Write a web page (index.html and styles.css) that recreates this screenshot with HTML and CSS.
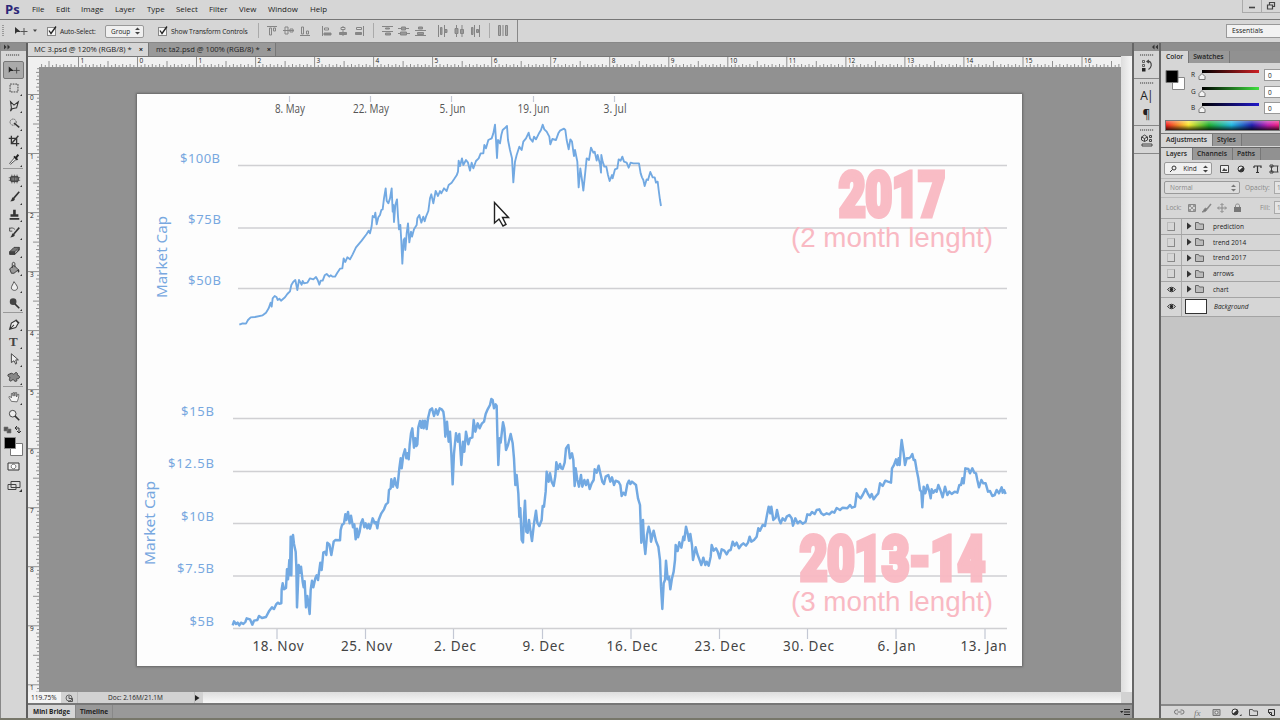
FILE: index.html
```html
<!DOCTYPE html>
<html lang="en">
  <head>
    <meta charset="UTF-8" />
    <meta name="viewport" content="width=device-width, initial-scale=1.0" />
    <title>MC 3.psd</title>
    <link rel="stylesheet" href="styles.css">
  </head>
  <body>
    <div class="app">
      <header class="menubar">
        <span class="logo">Ps</span>
        <nav class="menu">
          <span>File</span><span>Edit</span><span>Image</span><span>Layer</span><span>Type</span><span>Select</span><span>Filter</span><span>View</span><span>Window</span><span>Help</span>
        </nav>
        <div class="window-buttons">
          <span><svg width="10" height="10"><path d="M2 6.5h6" stroke="#444" stroke-width="1.6" /></svg></span>
          <span><svg width="10" height="10" fill="none" stroke="#444" stroke-width="1.2"><path d="M3.5 3.500V1.500h5v4h-2M1.500 4h5v4h-5z" /></svg></span>
        </div>
      </header>

      <div class="options">
        <svg class="options-tool" width="38" height="22" viewBox="0 0 38 22">
          <path d="M3 5v12" stroke="#999" stroke-width="2" stroke-dasharray="1 1" />
          <path d="M15 7v7l2-2h4z" fill="#333" />
          <path d="M24 8v7M20.500 11.500h7" stroke="#555" stroke-width="1" />
          <path d="M33 9.500h4l-2 2.500z" fill="#444" />
        </svg>
        <span class="check"><svg width="10" height="10" viewBox="0 0 10 10"><path d="M2 4.500l2 3L9 .5" fill="none" stroke="#222" stroke-width="1.300" /></svg></span>
        <span class="opt-label auto">Auto-Select:</span>
        <span class="select group">Group<svg width="5" height="8"><path d="M0 3l2.500-2.500L5 3zM0 5l2.500 2.500L5 5z" fill="#444" /></svg></span>
        <span class="check second"><svg width="10" height="10" viewBox="0 0 10 10"><path d="M2 4.500l2 3L9 .5" fill="none" stroke="#222" stroke-width="1.300" /></svg></span>
        <span class="opt-label">Show Transform Controls</span>
        <!-- align and distribute buttons -->
        <svg class="align" width="262" height="22" viewBox="256 20 262 22" stroke="#858585" fill="none">
          <path d="M257.500 23v15M372.500 23v15M488.500 23v15" stroke="#aaa" />
          <path d="M516.500 20v22" stroke="#888" />
          <path d="M266 26.500h10M282 30.500h11M299 35.500h10M321.500 26v10M342 26v10M362.500 26v10" />
          <path d="M268.500 28v7h2v-7zM272.500 28v3h2v-3zM284 27v7h3v-7zM289 29v3h3v-3zM300.500 27v7h2v-7zM305.500 31v3h2v-3z" />
          <path d="M323.500 28h4v2h-4zM355.500 27.500h5v2h-5zM340 27.500h4v2h-4z" fill="#ddd" />
          <path d="M323 33h7v2h-7zM338.500 32.500h7v2h-7zM354.500 32.500h6v2h-6z" fill="#888" />
          <path d="M381 26.500h11M381 31.500h11M397 28.500h11M397 33.500h12M414 30.500h11M414 35.500h11" />
          <path d="M384.500 28h4v1h-4zM384.500 33h5v2h-5zM400.500 27h4v3h-4zM399.500 32h6v3h-6zM417.500 27h4v2h-4zM416.500 32.500h6v2h-6z" fill="#999" />
          <path d="M437.500 25v12M443.500 25v12M455.500 25v12M461 25v12M473.500 25v12M478.500 25v12" />
          <path d="M439.500 27.500h1.500v7h-1.500zM444 29.500h2v3h-2zM454 28.500h3v5h-3zM459.500 29.500h3v4h-3zM470.500 27.500h1.500v7h-1.500zM475.500 29.500h2v3h-2z" fill="#999" />
          <path d="M497.500 25.500h2v10h-2zM504.500 25.500h2v10h-2z" fill="#aaa" />
          <path d="M502 25v11" />
        </svg>
        <span class="workspace">Essentials</span>
      </div>

      <main class="workarea">
        <aside class="toolbox">
          <div class="dock-head"><svg width="8" height="6"><path d="M1 .5L3.500 3 1 5.500zM4.500.5L7 3 4.500 5.500z" fill="#333" /></svg></div>
          <div class="grip"></div>
          <div class="tool active"><svg viewBox="0 0 16 16"><path d="M2 4v7l2-2h4z" fill="#222" /><path d="M11 5v7M7.500 8.500h7" stroke="#444" /></svg></div>
          <div class="tool more"><svg viewBox="0 0 16 16"><path d="M3.500 3.500h9v9h-9z" fill="none" stroke="#333" stroke-dasharray="2 1" /></svg></div>
          <div class="tool more"><svg viewBox="0 0 16 16"><path d="M4 3l4 4 5-4-2 7-5 1-2 3 1-4z" fill="none" stroke="#333" stroke-width="1.200" /></svg></div>
          <div class="tool more"><svg viewBox="0 0 16 16"><circle cx="7" cy="7" r="3.500" fill="none" stroke="#444" stroke-dasharray="1.500 1" /><path d="M8 8l6 5" stroke="#333" stroke-width="1.800" /></svg></div>
          <div class="tool more"><svg viewBox="0 0 16 16"><path d="M5 2v9h9M2 5h9v9M13 2L6 10" fill="none" stroke="#333" stroke-width="1.500" /></svg></div>
          <div class="tool more"><svg viewBox="0 0 16 16"><path d="M3 13l6-7 2 2-7 6z" fill="#eee" stroke="#444" /><path d="M8 5l4 4M10 7l3-4" stroke="#222" stroke-width="2.200" /></svg></div>
          <div class="rule"></div>
          <div class="tool more"><svg viewBox="0 0 16 16"><rect x="4" y="5" width="9" height="6" rx="1.500" fill="#888" stroke="#333" /><path d="M5.500 3v10M8.500 3v10M11.500 3v10M2 6.500h13M2 9.500h13" stroke="#444" stroke-width=".8" /></svg></div>
          <div class="tool more"><svg viewBox="0 0 16 16"><path d="M14 2L8 9" stroke="#333" stroke-width="1.800" /><path d="M3 13c2 0 6 0 6-3L7 8c-2 1-1 4-4 5z" fill="#333" /></svg></div>
          <div class="tool more"><svg viewBox="0 0 16 16"><path d="M7 2h3v5h3v3H4V7h3zM3 11.500h11v2H3z" fill="#333" /></svg></div>
          <div class="tool more"><svg viewBox="0 0 16 16"><path d="M14 3L8 10" stroke="#333" stroke-width="1.800" /><path d="M3 14c3 0 6-1 6-3L7 9c-2 1-1 4-4 5z" fill="#333" /><path d="M3 4c2-1 4-1 6 1M3 3v4h3" fill="none" stroke="#444" /></svg></div>
          <div class="tool more"><svg viewBox="0 0 16 16"><path d="M3 10l5-5h6l-5 5z" fill="#777" stroke="#333" /><path d="M3 10v3h6v-3M9 13l5-5V5" fill="#444" stroke="#333" /></svg></div>
          <div class="tool more"><svg viewBox="0 0 16 16"><path d="M3 9l5-4 5 5-5 4H5z" fill="#999" stroke="#333" /><path d="M6 8V3c0-2 3-2 3 0v4" fill="none" stroke="#333" /><path d="M13 9c2 2 1 4 0 4s-1-2 0-4" fill="#333" /></svg></div>
          <div class="tool more"><svg viewBox="0 0 16 16"><path d="M8 3c2 3 4 5 4 7 0 4-7 4-7 0 0-2 2-4 3-7z" fill="#eee" stroke="#444" /></svg></div>
          <div class="tool more"><svg viewBox="0 0 16 16"><circle cx="7" cy="6.500" r="3.800" fill="#444" /><path d="M9 9l5 5" stroke="#333" stroke-width="1.800" /></svg></div>
          <div class="rule"></div>
          <div class="tool more"><svg viewBox="0 0 16 16"><path d="M3 14l2-7 5-3 3 3-3 5zM3 14l5-5M10 3l4 4" fill="#eee" stroke="#333" stroke-width="1.200" /></svg></div>
          <div class="tool more type">T</div>
          <div class="tool more"><svg viewBox="0 0 16 16"><path d="M5 2v10l3-2 2 4 1-1-1-4h3z" fill="#eee" stroke="#333" /></svg></div>
          <div class="tool more"><svg viewBox="0 0 16 16"><path d="M4 4c2-1 3 1 4 1s1-3 3-2 0 3 1 3 3 1 2 3-3 0-3 1 1 3-1 3-2-2-3-2-3 3-4 1 1-3 0-4-2 0-2-2 4-1 3-2z" fill="#888" stroke="#333" /></svg></div>
          <div class="rule"></div>
          <div class="tool more"><svg viewBox="0 0 16 16"><path d="M5 13L2 8l1-1 2 2V4h1.500l.5 3V3h1.500L9 7l.5-4H11v5l1-3h1.500c0 4-1 6-2 8.500z" fill="#f4f4f4" stroke="#444" stroke-width=".8" /></svg></div>
          <div class="tool"><svg viewBox="0 0 16 16"><circle cx="6.500" cy="6.500" r="3.800" fill="#eee" stroke="#333" /><path d="M9 9l5 5" stroke="#333" stroke-width="1.800" /></svg></div>
          <svg class="colors" width="24" height="72" viewBox="0 0 24 72">
            <path d="M3 3h4v4H3zM6 5h4v4H6z" fill="#555" stroke="#777" stroke-width=".6" />
            <path d="M14 4h4v5M16 2l-2 2 2 2M16 7l2 2 2-2" fill="none" stroke="#333" />
            <path d="M9.500 19.500h12v12h-12z" fill="#fff" stroke="#777" />
            <path d="M3.500 13.500h11v11h-11z" fill="#000" stroke="#888" />
            <path d="M7 39h11v7H7z" fill="#eee" stroke="#333" />
            <circle cx="12.500" cy="42.500" r="2.300" fill="#fff" stroke="#333" stroke-dasharray="1 .6" />
            <path d="M10 57.500h9v6h-9zM7 60.500h8v5H7z" fill="#ddd" stroke="#444" />
            <path d="M21 65v3h-3z" fill="#333" />
          </svg>
        </aside>

        <section class="document">
          <div class="tabs">
            <span class="tab active">MC 3.psd @ 120% (RGB/8) *<b>×</b></span>
            <span class="tab">mc ta2.psd @ 100% (RGB/8) *<b>×</b></span>
          </div>
          <div class="viewport">
            <div class="ruler-corner"></div>
            <svg class="ruler-h" id="rulerH" width="1082" height="11" viewBox="39 56 1082 11"></svg>
            <div class="scroll-v"></div>
            <svg class="ruler-v" id="rulerV" width="11" height="625" viewBox="28 67 11 625"></svg>
            <div class="canvas">
              <svg class="page" width="885" height="572" viewBox="137 94 885 572">
                <g class="grid">
                  <path d="M238 165.500h769M238 228h769M238 288.500h769" />
                  <path d="M233 418.500h774M233 471.500h774M233 523.500h774M233 576h774M233 628.500h774" />
                </g>
                <g class="ticks">
                  <path d="M289.500 96v6M370.500 96v6M451.500 96v6M533.500 96v6M614.500 96v6" />
                  <path d="M277 629v10M365.500 629v10M453.500 629v10M542.500 629v10M631 629v10M719.500 629v10M807.500 629v10M896 629v10M985 629v10" />
                </g>
                <g class="dates small">
                  <text x="275" y="113" textLength="30" lengthAdjust="spacingAndGlyphs">8. May</text>
                  <text x="353" y="113" textLength="36" lengthAdjust="spacingAndGlyphs">22. May</text>
                  <text x="439.500" y="113" textLength="26" lengthAdjust="spacingAndGlyphs">5. Jun</text>
                  <text x="517.500" y="113" textLength="32" lengthAdjust="spacingAndGlyphs">19. Jun</text>
                  <text x="603.500" y="113" textLength="23" lengthAdjust="spacingAndGlyphs">3. Jul</text>
                </g>
                <g class="dates">
                  <text x="252.500" y="651" textLength="51">18. Nov</text>
                  <text x="341" y="651" textLength="51">25. Nov</text>
                  <text x="434" y="651" textLength="42">2. Dec</text>
                  <text x="522.500" y="651" textLength="42">9. Dec</text>
                  <text x="606.500" y="651" textLength="51">16. Dec</text>
                  <text x="694.500" y="651" textLength="51">23. Dec</text>
                  <text x="783" y="651" textLength="51">30. Dec</text>
                  <text x="877.500" y="651" textLength="38">6. Jan</text>
                  <text x="960.500" y="651" textLength="46">13. Jan</text>
                </g>
                <g class="amounts">
                  <text x="180" y="163" textLength="40">$100B</text>
                  <text x="188" y="224" textLength="33">$75B</text>
                  <text x="188" y="285" textLength="33">$50B</text>
                  <text x="181" y="416" textLength="33">$15B</text>
                  <text x="168" y="468" textLength="46">$12.5B</text>
                  <text x="181" y="521" textLength="33">$10B</text>
                  <text x="177" y="573" textLength="37">$7.5B</text>
                  <text x="189.500" y="626" textLength="24.500">$5B</text>
                  <text class="axis" transform="translate(167 298) rotate(-90)" textLength="82" lengthAdjust="spacingAndGlyphs">Market Cap</text>
                  <text class="axis" transform="translate(155 565) rotate(-90)" textLength="84" lengthAdjust="spacingAndGlyphs">Market Cap</text>
                </g>
                <polyline class="line thin" transform="translate(230 90) scale(.33333)" points="28,704 38,700 48,701 54,690 62,682 75,681 98,676 108,668 116,655 122,638 125,650 128,625 134,618 140,622 143,630 148,626 153,632 165,622 172,612 180,604 184,585 190,575 196,570 202,600 207,570 215,584 218,573 222,580 232,578 240,565 250,568 258,561 263,570 268,584 272,572 278,572 284,556 290,552 298,560 302,556 308,560 315,560 322,548 330,536 337,535 341,505 346,516 352,502 360,508 368,493 378,472 395,452 410,432 416,422 420,430 425,408 428,378 433,382 436,368 440,403 445,382 450,375 454,360 458,358 462,325 467,295 470,332 475,340 480,325 485,295 488,365 490,345 492,396 496,345 501,328 504,380 507,418 511,405 514,455 517,521 521,450 524,445 526,480 530,430 534,400 538,457 543,425 546,440 552,418 560,405 562,385 568,375 574,398 580,380 584,394 588,380 595,363 600,325 604,313 610,340 617,303 624,318 630,303 634,310 642,295 650,303 656,285 665,278 672,268 680,256 684,245 686,212 690,228 696,205 700,225 708,210 714,218 720,242 725,218 730,235 738,213 746,205 752,190 760,190 763,165 768,175 775,150 785,145 790,130 795,104 798,150 801,204 804,150 810,160 814,135 818,120 824,115 831,108 834,150 840,180 846,205 850,277 855,215 860,195 868,170 875,180 880,155 888,145 896,128 900,145 908,155 912,140 918,148 928,128 933,120 938,104 943,118 950,125 958,140 961,163 967,147 978,150 985,130 990,122 1002,116 1006,120 1010,150 1016,178 1021,148 1026,155 1030,185 1032,198 1035,180 1042,215 1046,292 1051,235 1056,270 1060,302 1066,245 1070,205 1077,210 1083,173 1090,188 1094,185 1100,212 1103,195 1110,222 1113,248 1114,195 1118,215 1123,230 1129,230 1134,255 1139,273 1146,255 1148,265 1155,238 1162,235 1166,208 1172,212 1177,200 1182,215 1190,218 1196,233 1202,218 1210,220 1227,220 1232,250 1236,262 1240,270 1244,288 1250,268 1254,270 1261,246 1268,262 1274,262 1278,278 1283,275 1286,300 1290,330 1293,348" />
                <polyline class="line" transform="translate(140 390) scale(.33333)" points="278,706 282,694 288,702 293,698 298,706 303,698 310,702 316,696 320,685 330,688 337,704 342,692 352,690 357,678 366,684 378,681 388,662 396,652 402,657 408,644 413,638 418,641 424,640 425,598 428,580 432,598 438,594 441,538 444,568 448,510 450,555 452,440 454,556 456,445 459,435 462,462 467,485 469,530 471,652 474,580 476,525 480,548 483,530 488,575 491,592 494,574 498,652 502,618 505,640 509,672 512,600 516,572 520,592 526,565 530,556 534,570 541,518 545,540 550,487 556,485 559,495 562,458 568,463 574,495 581,455 586,450 600,451 602,420 606,405 612,400 616,373 619,390 624,366 629,400 633,377 639,412 643,403 647,448 651,416 654,442 659,425 663,400 668,388 673,412 677,400 682,415 686,402 690,416 694,402 698,385 704,400 708,396 712,415 716,390 724,370 732,358 738,343 744,338 747,300 752,295 754,268 759,290 764,265 768,285 772,293 775,265 778,235 782,205 785,235 790,195 795,178 799,205 802,190 806,208 809,165 813,130 817,115 822,173 826,145 829,168 832,163 835,112 840,93 844,113 848,92 851,115 855,92 860,117 864,85 870,60 876,55 882,78 888,58 893,74 899,55 905,58 910,65 913,88 916,140 921,95 926,155 930,125 934,190 938,283 942,190 948,130 954,155 958,132 964,225 969,155 973,185 978,125 985,163 990,145 997,142 1001,90 1006,125 1013,100 1019,115 1026,100 1032,95 1037,72 1043,58 1050,45 1054,27 1058,30 1062,55 1067,43 1070,48 1072,130 1075,225 1079,145 1082,158 1089,97 1093,115 1098,180 1104,165 1112,132 1118,160 1122,205 1126,285 1130,255 1135,310 1138,380 1141,355 1145,450 1149,457 1152,380 1155,332 1159,425 1163,428 1167,390 1171,420 1176,453 1182,400 1188,362 1192,398 1198,408 1205,390 1208,348 1212,350 1217,305 1220,245 1226,275 1230,250 1235,275 1241,288 1246,258 1249,217 1254,237 1260,222 1264,235 1268,237 1274,218 1278,175 1285,165 1290,205 1296,190 1300,210 1304,288 1307,235 1312,270 1317,290 1323,255 1327,290 1333,270 1338,285 1343,270 1349,297 1355,280 1361,270 1364,238 1370,248 1376,227 1381,250 1387,275 1392,282 1397,260 1405,255 1411,275 1416,262 1422,285 1427,272 1436,276 1441,285 1445,318 1450,308 1456,315 1462,282 1467,272 1471,282 1476,275 1488,285 1494,325 1500,345 1504,458 1509,390 1512,455 1516,492 1521,435 1526,410 1531,430 1533,455 1541,422 1548,453 1555,470 1560,510 1563,590 1567,657 1571,580 1575,570 1578,512 1583,568 1587,560 1591,598 1596,565 1601,545 1605,510 1607,465 1613,483 1618,457 1624,473 1630,440 1633,450 1638,410 1643,430 1647,452 1651,432 1656,465 1659,510 1667,472 1672,492 1678,508 1684,525 1690,503 1696,525 1700,515 1706,527 1712,500 1715,465 1721,482 1728,475 1733,485 1739,505 1745,478 1753,482 1760,493 1766,482 1772,480 1778,455 1784,467 1790,458 1797,475 1804,465 1810,460 1818,467 1824,458 1829,440 1834,455 1842,450 1850,440 1855,415 1860,422 1868,405 1875,408 1881,375 1886,350 1891,370 1894,350 1900,390 1907,383 1911,360 1917,388 1922,400 1928,385 1935,392 1940,380 1948,375 1955,385 1959,407 1966,385 1973,400 1980,393 1988,401 1997,395 2002,373 2010,375 2016,366 2024,372 2030,360 2038,358 2044,370 2051,375 2060,370 2068,373 2076,365 2083,368 2090,354 2100,360 2108,353 2122,355 2130,345 2136,353 2145,350 2150,310 2156,320 2162,325 2168,315 2177,297 2183,310 2190,322 2195,312 2201,328 2208,318 2215,310 2220,280 2228,288 2236,272 2244,275 2253,278 2256,235 2262,225 2268,208 2272,225 2276,205 2279,225 2282,180 2285,150 2291,190 2295,225 2300,205 2307,205 2313,200 2317,192 2321,210 2325,210 2330,240 2335,265 2340,300 2344,305 2347,352 2351,290 2356,310 2362,285 2368,305 2372,325 2375,298 2380,308 2386,300 2390,305 2395,285 2401,300 2408,322 2415,290 2422,315 2428,305 2435,312 2444,305 2452,308 2458,285 2463,285 2467,265 2471,280 2476,235 2485,237 2490,250 2497,235 2503,248 2508,250 2512,270 2517,292 2524,270 2530,280 2537,280 2544,305 2550,303 2557,318 2564,315 2570,300 2577,310 2585,292 2588,308 2592,300 2597,312" />
                <g class="titles">
                  <text class="year" x="839" y="215.500" textLength="106" lengthAdjust="spacingAndGlyphs">2017</text>
                  <text class="length" x="791" y="247" textLength="202" lengthAdjust="spacingAndGlyphs">(2 month lenght)</text>
                  <text class="year" x="800" y="579.500" textLength="185" lengthAdjust="spacingAndGlyphs">2013-14</text>
                  <text class="length" x="791" y="611" textLength="202" lengthAdjust="spacingAndGlyphs">(3 month lenght)</text>
                </g>
                <path d="M494.500 202.500v20.500l4.500-4 4 7 3-1.500-3.500-7h6z" fill="#fff" stroke="#222" stroke-width="1.400" />
              </svg>
            </div>
          </div>
          <div class="status">
            <span class="zoom">119.75%</span>
            <span class="export"><svg width="10" height="10" viewBox="0 0 10 10"><circle cx="5" cy="5" r="3" fill="none" stroke="#666" /><path d="M5 3v2.500h3.500v3H4" fill="none" stroke="#555" /></svg></span>
            <span class="doc-size">Doc: 2.16M/21.1M</span>
            <span class="arrow"><svg width="5" height="6"><path d="M0 0l4.500 3L0 6z" fill="#222" /></svg></span>
            <span class="scroll-h"></span>
          </div>
          <div class="bottom-tabs">
            <span class="tab active">Mini Bridge</span><span class="tab">Timeline</span>
            <svg width="12" height="8"><path d="M0 3h3.500L1.700 5z" fill="#222" /><path d="M4 1.500h6M4 4h6M4 6.500h6" stroke="#222" /></svg>
          </div>
        </section>

        <aside class="dock">
          <div class="dock-head right"><svg width="8" height="6"><path d="M3.500.5L1 3l2.500 2.500zM7 .5L4.500 3 7 5.500z" fill="#333" /></svg></div>
          <div class="dock-group one"><div class="grip"></div>
            <svg width="14" height="14" viewBox="0 0 14 14" fill="none" stroke="#444"><path d="M2.500 1.500h2v2h-2zM2.500 5.500h2v2h-2z" stroke-width=".8" /><path d="M2 9h3.500v3.500H2z" fill="#222" stroke="none" /><path d="M7.500 2.500h3M9 1l-2 1.500L9 4M9.500 2.500c3 2 2 6-1 8" stroke-width="1.200" /></svg>
          </div>
          <div class="dock-group two"><div class="grip"></div><span class="char">A|</span><span class="para">¶</span></div>
          <div class="dock-group three"><div class="grip"></div>
            <svg width="14" height="14" viewBox="0 0 14 14" fill="none" stroke="#444"><path d="M4.500 1L7.500 3v3l-3 1.500-3-1.500V3zM1.500 3l3 1.500 3-1.500M4.500 4.500v3M9.500 1.500h2v2h-2zM9.500 5.500h2v2h-2zM2 10h10v2H2z" /></svg>
          </div>
        </aside>

        <aside class="panels">
          <div class="dock-head"></div>
          <div class="panel-tabs"><span class="tab active">Color</span><span class="tab">Swatches</span></div>
          <div class="color-panel">
            <svg class="swatch" width="28" height="30" viewBox="0 0 28 30"><path d="M11.500 8.500h12v12h-12z" fill="#fff" stroke="#888" /><path d="M5 1.500h12v12h-12z" fill="#000" stroke="#777" /></svg>
            <div class="sliders">
              <div class="slider"><span>R</span><i class="track red"><svg width="8" height="7"><path d="M4 .5l3 3v3H1v-3z" fill="#f4f4f4" stroke="#777" /></svg></i><em>0</em></div>
              <div class="slider"><span>G</span><i class="track green"><svg width="8" height="7"><path d="M4 .5l3 3v3H1v-3z" fill="#f4f4f4" stroke="#777" /></svg></i><em>0</em></div>
              <div class="slider"><span>B</span><i class="track blue"><svg width="8" height="7"><path d="M4 .5l3 3v3H1v-3z" fill="#f4f4f4" stroke="#777" /></svg></i><em>0</em></div>
            </div>
          </div>
          <div class="spectrum"></div>
          <div class="panel-tabs adjustments"><span class="tab active">Adjustments</span><span class="tab">Styles</span></div>
          <div class="panel-tabs layer-tabs"><span class="tab active">Layers</span><span class="tab">Channels</span><span class="tab">Paths</span></div>
          <div class="filter-row">
            <span class="select kind"><svg width="7" height="8" viewBox="0 0 7 8"><circle cx="4" cy="3" r="2" fill="none" stroke="#333" /><path d="M2.500 4.500L0 7" stroke="#333" /></svg>Kind<svg width="5" height="8"><path d="M0 3l2.500-2.500L5 3zM0 5l2.500 2.500L5 5z" fill="#444" /></svg></span>
            <svg width="60" height="12" viewBox="0 0 60 12"><path d="M.5 2.500h8v7h-8z" fill="#eee" stroke="#444" /><path d="M2 8l2-3 2 2 1-1v2z" fill="#444" /><circle cx="21" cy="6" r="3" fill="#eee" stroke="#333" /><path d="M23.500 3.500A3.400 3.400 0 0 1 18.500 8z" fill="#333" /><path d="M34 3h7v2M37.500 3v6.500M36 9.500h3M34 3v2" fill="none" stroke="#333" stroke-width="1.200" /><path d="M51.500 3v6h7M51.500 3h7M50 2h3v2h-3zM50 8h3v2h-3zM57.500 3v6" fill="none" stroke="#444" /></svg>
          </div>
          <div class="blend-row"><span class="select">Normal<svg width="5" height="8"><path d="M0 3l2.500-2.500L5 3zM0 5l2.500 2.500L5 5z" fill="#777" /></svg></span><span>Opacity:</span><em>1</em></div>
          <div class="lock-row"><span class="lock-label">Lock:</span>
            <svg width="60" height="12" viewBox="0 0 60 12" fill="none" stroke="#888"><path d="M4.500 2.500h7v7h-7z" /><path d="M5 3h2v2H5zM9 3h2v2H9zM7 5h2v2H7zM5 7h2v2H5zM9 7h2v2H9z" fill="#999" stroke="none" /><path d="M27 2l-4 5" stroke-width="1.500" /><path d="M18 10c3 0 5-1 5-3l-1-1c-2 0-2 3-4 4z" fill="#777" /><path d="M38 2v8M34 6h8M36.500 3L38 1.500 39.500 3M36.500 9l1.500 1.500L39.500 9M35 4.500L33.500 6 35 7.500M41 4.500L42.500 6 41 7.500" /><path d="M51.500 5V3.500c0-2 4-2 4 0V5" /><path d="M50 5h7v5h-7z" fill="#777" stroke="none" /></svg>
            <span class="fill">Fill:</span><em>1</em>
          </div>
          <ul class="layers">
            <li><span class="eye"><i></i></span><svg class="folder" viewBox="0 0 20 10"><path d="M1 1.500v7l4.500-3.500z" fill="#333" /><path d="M9.500 8.500v-7h3l1 1.500h4v5.500z" fill="#bbb" stroke="#666" /></svg>prediction</li>
            <li><span class="eye"><i></i></span><svg class="folder" viewBox="0 0 20 10"><path d="M1 1.500v7l4.500-3.500z" fill="#333" /><path d="M9.500 8.500v-7h3l1 1.500h4v5.500z" fill="#bbb" stroke="#666" /></svg>trend 2014</li>
            <li><span class="eye"><i></i></span><svg class="folder" viewBox="0 0 20 10"><path d="M1 1.500v7l4.500-3.500z" fill="#333" /><path d="M9.500 8.500v-7h3l1 1.500h4v5.500z" fill="#bbb" stroke="#666" /></svg>trend 2017</li>
            <li><span class="eye"><i></i></span><svg class="folder" viewBox="0 0 20 10"><path d="M1 1.500v7l4.500-3.500z" fill="#333" /><path d="M9.500 8.500v-7h3l1 1.500h4v5.500z" fill="#bbb" stroke="#666" /></svg>arrows</li>
            <li><span class="eye"><svg width="9" height="7" viewBox="0 0 9 7"><path d="M.5 3.500Q4.500-1 8.500 3.500 4.500 8 .5 3.500z" fill="#ddd" stroke="#333" /><circle cx="4.500" cy="3.500" r="1.700" fill="#222" /></svg></span><svg class="folder" viewBox="0 0 20 10"><path d="M1 1.500v7l4.500-3.500z" fill="#333" /><path d="M9.500 8.500v-7h3l1 1.500h4v5.500z" fill="#bbb" stroke="#666" /></svg>chart</li>
            <li class="background"><span class="eye"><svg width="9" height="7" viewBox="0 0 9 7"><path d="M.5 3.500Q4.500-1 8.500 3.500 4.500 8 .5 3.500z" fill="#ddd" stroke="#333" /><circle cx="4.500" cy="3.500" r="1.700" fill="#222" /></svg></span><span class="thumb"></span>Background</li>
          </ul>
          <div class="layer-actions">
            <svg width="117" height="12" viewBox="1163 706 117 12" fill="none" stroke="#777">
              <path d="M1178 710h-1.500a2 2 0 0 0 0 4h1.500M1180.500 710h1.500a2 2 0 0 1 0 4h-1.500M1177.500 712h4" />
              <path d="M1213 709.500h7v6h-7z" fill="#bbb" /><circle cx="1216.500" cy="712.500" r="1.500" fill="#eee" />
              <circle cx="1235" cy="712" r="3" fill="#eee" stroke="#333" /><path d="M1237.500 709.500a3.400 3.400 0 0 1-5 4.500z" fill="#333" stroke="none" /><path d="M1241.500 714v2h-2z" fill="#333" stroke="none" />
              <path d="M1249.500 715.500v-6h3l1 1.500h4v4.500z" stroke="#555" />
              <path d="M1268.500 709.500h6v6h-3l-3-3zM1268.500 712.500h3v3" stroke="#333" />
              <text x="1194" y="715.500" class="fx">fx</text>
            </svg>
          </div>
        </aside>
      </main>
      <div class="taskbar"></div>
    </div>

    <script>
      // Ruler marks: one unit is 59px, split in sixteenths, zero at the page corner
      const UNIT = 59.03;

      function tickLength(i) {
        if (i % 16 === 0) return 11;
        if (i % 8 === 0) return 6;
        return i % 2 === 0 ? 3 : 2;
      }

      let hTicks = "";
      let hLabels = "";
      for (let i = -26; i <= 266; i++) {
        const x = (137.5 + (i * UNIT) / 16).toFixed(1);
        hTicks += `M${x} 67v-${tickLength(i)}`;
        if (i % 16 === 0) {
          hLabels += `<text x="${+x + 2}" y="62.5">${Math.abs(i / 16)}</text>`;
        }
      }
      document.getElementById("rulerH").innerHTML = `<path d="${hTicks}" />${hLabels}`;

      let vTicks = "";
      let vLabels = "";
      for (let i = -7; i <= 162; i++) {
        const y = (94.5 + (i * UNIT) / 16).toFixed(1);
        vTicks += `M39 ${y}h-${tickLength(i)}`;
        if (i % 16 === 0) {
          vLabels += `<text x="30" y="${+y + 5.5}">${String(i / 16)[0]}</text>`;
        }
      }
      document.getElementById("rulerV").innerHTML = `<path d="${vTicks}" />${vLabels}`;
    </script>
  </body>
</html>
```
FILE: styles.css
```css
* {
  box-sizing: border-box;
}
body {
  margin: 0;
  font-family: "Open Sans", "Noto Sans", sans-serif;
  font-size: 6.5px;
  color: #222;
  overflow: hidden;
}
svg {
  display: block;
  flex: none;
}
em,
i {
  font-style: normal;
}
.app {
  width: 1280px;
  height: 720px;
  display: grid;
  grid-template-rows: 20px 23px 675px 2px;
  background-color: #d6d6d6;
}

/* menu and options bars */
.menubar {
  display: flex;
  align-items: center;
  border-bottom: 1px solid #777;
}
.logo {
  width: 32px;
  padding-left: 5px;
  font-size: 13px;
  font-weight: 700;
  line-height: 16px;
  padding-bottom: 2px;
  color: #2c2878;
}
.menu {
  display: grid;
  grid-template-columns: 24px 25px 34px 32px 29px 33px 30px 29px 42px 30px;
  font-size: 7.9px;
  line-height: 17px;
  padding-bottom: 1px;
}
.window-buttons {
  display: flex;
  align-self: flex-start;
  margin-left: auto;
}
.window-buttons span {
  width: 19px;
  height: 13px;
  padding: 1px 4px;
  border: 1px solid #aaa;
  border-top: 0;
  border-right: 0;
}
.options {
  display: flex;
  align-items: center;
  overflow: hidden;
  border-bottom: 1px solid #888;
}
.options-tool {
  width: 38px;
  margin-right: 9px;
}
.check {
  width: 9px;
  height: 9px;
  background-color: #f6f6f6;
  border: 1px solid #888;
}
.check svg {
  margin: -2px 0 0 -1px;
}
.check.second {
  margin-left: 14px;
}
.opt-label {
  width: 86px;
  margin-left: 4px;
  font-size: 6.7px;
  letter-spacing: -0.12px;
  white-space: nowrap;
}
.opt-label.auto {
  width: 45px;
}
.select {
  display: flex;
  align-items: center;
  justify-content: space-between;
  height: 13px;
  padding: 0 3px 0 5px;
  background-color: #f0f0f0;
  border: 1px solid #999;
  border-radius: 2px;
}
.group {
  width: 39px;
}
.workspace {
  width: 54px;
  height: 14px;
  margin-left: auto;
  padding-left: 5px;
  background-color: #f2f2f2;
  border: 1px solid #999;
  border-right: 0;
  font-size: 6.8px;
  line-height: 12px;
}

.workarea {
  display: grid;
  grid-template-columns: 28px 1105px 28px 119px;
  min-height: 0;
}
.dock-head {
  height: 8px;
  padding: 1px 2px;
  background-color: #8e8e8e;
  flex: none;
}
.dock-head.right {
  padding-left: 17px;
}
.grip {
  width: 14px;
  height: 2px;
  margin: 3px auto;
  background: repeating-linear-gradient(90deg, #888 0 1px, #c8c8c8 1px 2px);
  flex: none;
}
.tab b {
  margin-left: 7px;
  font-weight: 700;
}

/* toolbox */
.toolbox {
  display: flex;
  flex-direction: column;
  border-right: 2px solid #5f5f5f;
  border-left: 1px solid #888;
}
.toolbox .grip {
  margin: 3px 5px 5px;
}
.tool {
  position: relative;
  width: 21px;
  height: 17.75px;
  margin-left: 2px;
  padding: 2px 4px;
  flex: none;
}
.tool svg {
  width: 14px;
  height: 14px;
}
.tool.active {
  background-color: #aaa;
  border: 1px solid #777;
  border-radius: 2px;
  padding: 1px 3px;
}
.tool.more::after {
  content: "";
  position: absolute;
  right: 2px;
  bottom: 1px;
  border-left: 2px solid transparent;
  border-bottom: 2px solid #333;
}
.tool.type {
  font: bold 13px/15px "Liberation Serif", serif;
  padding-left: 6px;
  color: #444;
}
.rule {
  height: 1px;
  margin: 0 3px 1.5px 2px;
  background-color: #999;
  flex: none;
}

/* document window */
.document {
  display: grid;
  grid-template-rows: 13px 636px 13px 13px;
  min-width: 0;
  background-color: #919191;
  border-right: 1px solid #666;
}
.tabs {
  display: flex;
  font-size: 7.6px;
  line-height: 13px;
  white-space: nowrap;
}
.tabs .tab {
  width: 127px;
  padding-left: 7px;
  background-color: #999;
  border-right: 1px solid #777;
}
.tabs .tab.active {
  width: 121px;
  padding-left: 6px;
  background-color: #d6d6d6;
}
.viewport {
  display: grid;
  grid-template-columns: 11px 1082px 11px;
  grid-template-rows: 11px 625px;
}
.ruler-corner,
.ruler-h,
.ruler-v {
  background-color: #f0f0f0;
}
.ruler-corner,
.ruler-h {
  box-shadow: inset 0 1px #777;
}
.ruler-h path,
.ruler-v path {
  stroke: #777;
  stroke-width: 0.8;
}
.ruler-h text,
.ruler-v text {
  font-size: 6.5px;
  fill: #222;
}
.scroll-v {
  grid-column: 3;
  grid-row: 1 / 3;
  background: linear-gradient(90deg, #ddd, #f6f6f6);
}
.canvas {
  padding: 27px 0 0 98px;
  background-color: #919191;
}
.page {
  background-color: #fdfdfd;
  box-shadow: 0 0 2px 1px #666;
}

/* charts on the page */
.grid path {
  stroke: #d0d0d3;
  stroke-width: 1.6;
}
.ticks path {
  stroke: #c4c8d4;
  stroke-width: 1.2;
}
.page text {
  font-family: "Noto Sans", sans-serif;
}
.page .dates text {
  font-size: 13.5px;
  fill: #444;
}
.page .dates.small text {
  font-family: "Open Sans", sans-serif;
  font-size: 12.5px;
  fill: #555;
}
.page .amounts text {
  font-size: 13px;
  fill: #78a8e0;
}
.page .amounts .axis {
  font-size: 14.5px;
}
.line {
  fill: none;
  stroke: #72a9e2;
  stroke-width: 7.4;
  stroke-linejoin: round;
}
.line.thin {
  stroke-width: 5.6;
}
.titles {
  fill: #f9b9c3;
}
.page .year {
  font-family: Roboto, sans-serif;
  font-size: 61px;
  font-weight: 900;
  stroke: #f9b9c3;
  stroke-width: 5;
  opacity: 0.95;
}
.page .length {
  font-family: "Liberation Sans", Arial, sans-serif;
  font-size: 28px;
}

.status {
  display: grid;
  grid-template-columns: 33px 16px 118px 8px 1fr;
  align-items: center;
  background-color: #d2d2d2;
  border-bottom: 2px solid #777;
}
.zoom {
  padding-left: 3px;
  background-color: #f4f4f4;
  line-height: 11px;
}
.export {
  padding-left: 3px;
}
.doc-size {
  height: 11px;
  padding-left: 30px;
  line-height: 11px;
  border-left: 1px solid #bbb;
  border-right: 1px solid #bbb;
}
.scroll-h {
  height: 11px;
  margin-right: 11px;
  background: linear-gradient(#ddd, #f8f8f8);
}
.bottom-tabs {
  display: flex;
  align-items: center;
  line-height: 13px;
  font-weight: 700;
  background-color: #999;
}
.bottom-tabs .tab {
  width: 37px;
  padding-left: 4px;
  border-right: 1px solid #888;
}
.bottom-tabs .active {
  width: 48px;
  padding-left: 5px;
  background-color: #d6d6d6;
}
.bottom-tabs svg {
  margin-left: auto;
}

/* collapsed dock */
.dock {
  border-left: 1px solid #666;
  border-right: 2px solid #666;
}
.dock-group {
  display: flex;
  flex-direction: column;
  align-items: center;
  border-bottom: 1px solid #888;
  overflow: hidden;
}
.dock-group.one {
  height: 28px;
}
.dock-group.two {
  height: 47px;
}
.dock-group.three {
  height: 28px;
}
.char {
  font-size: 12px;
  letter-spacing: -0.8px;
  line-height: 17px;
}
.para {
  font-size: 12px;
  line-height: 22px;
}

/* right-hand panels */
.panels {
  display: flex;
  flex-direction: column;
  overflow: hidden;
}
.panel-tabs {
  display: flex;
  flex: none;
  height: 12px;
  line-height: 12px;
  font-weight: 600;
  font-size: 6.7px;
  background-color: #919191;
}
.panel-tabs .tab {
  padding: 0 5px 0 4px;
  background-color: #999;
  border-right: 1px solid #777;
}
.panel-tabs .tab.active {
  padding-left: 5px;
  background-color: #d6d6d6;
}
.color-panel {
  display: flex;
  height: 57px;
  padding-top: 6px;
  flex: none;
}
.swatch {
  margin-right: 2px;
}
.slider {
  display: grid;
  grid-template-columns: 11px 57px 20px;
  height: 16.5px;
}
.slider span {
  padding-top: 1px;
}
.slider em {
  width: 20px;
  height: 12px;
  margin-left: 5px;
  padding-left: 3px;
  line-height: 11px;
  background-color: #fff;
  border: 1px solid #999;
}
.track {
  height: 3px;
  margin-top: 1px;
}
.track svg {
  margin: 3px 0 0 -4px;
}
.red {
  background: linear-gradient(90deg, #000, #cc2024);
}
.green {
  background: linear-gradient(90deg, #000, #40e040);
}
.blue {
  background: linear-gradient(90deg, #000, #2018c8);
}
.spectrum {
  height: 11px;
  margin-left: 4px;
  flex: none;
  border: 1px solid #777;
  background: linear-gradient(rgba(255, 255, 255, 0.35), transparent 45%, rgba(0, 0, 0, 0.75)), linear-gradient(90deg, #f02020, #f8e830 20%, #20b030 38%, #20b8e0 58%, #2020b0 76%, #c020b0 90%, #f02080);
}
.adjustments {
  margin-top: 2px;
  height: 13px;
  line-height: 12px;
  border-top: 1px solid #777;
}
.layer-tabs {
  margin-top: 1px;
  border-top: 1px solid #666;
  height: 13px;
}
.filter-row {
  display: flex;
  align-items: center;
  height: 17.5px;
  padding-left: 3px;
  flex: none;
}
.kind {
  width: 48px;
  margin-right: 8px;
}
.blend-row {
  display: flex;
  align-items: center;
  height: 19px;
  padding-left: 3px;
  color: #888;
  border-top: 1px solid #bbb;
  flex: none;
}
.blend-row .select {
  width: 76px;
  margin-right: 5px;
  background-color: #ddd;
}
.blend-row em,
.lock-row em {
  width: 12px;
  height: 13px;
  margin-left: auto;
  padding-left: 2px;
  line-height: 12px;
  background-color: #e4e4e4;
  border: 1px solid #aaa;
}
.blend-row em {
  margin-right: -6px;
}
.lock-row {
  display: flex;
  align-items: center;
  height: 21.5px;
  padding-left: 5px;
  color: #888;
  border-top: 1px solid #bbb;
  flex: none;
}
.lock-label {
  width: 18px;
}
.lock-row .fill {
  margin-left: 16px;
}
.lock-row em {
  margin-right: -6px;
}
.layers {
  flex: 1;
  margin: 0;
  padding: 0;
  list-style: none;
  background-color: #c5c5c5;
}
.layers li {
  display: flex;
  align-items: center;
  height: 15.75px;
  background-color: #d6d6d6;
  border-top: 1px solid #a4a4a4;
}
.layers .background {
  height: 20px;
  border-bottom: 1px solid #a4a4a4;
  font-style: italic;
}
.eye {
  display: flex;
  align-items: center;
  justify-content: center;
  align-self: stretch;
  width: 21px;
  border-right: 1px solid #aaa;
}
.eye i {
  width: 8px;
  height: 9px;
  border: 1px solid #bbb;
  border-right-color: #888;
  border-bottom-color: #888;
}
.folder {
  width: 20px;
  height: 10px;
  margin: 0 7px 0 4px;
}
.thumb {
  width: 22px;
  height: 15px;
  margin: 0 7px 0 3px;
  background-color: #fff;
  border: 1px solid #333;
}
.layer-actions {
  height: 14px;
  border-top: 2px solid #888;
  background-color: #d6d6d6;
  padding-left: 2px;
}
.fx {
  font: italic 9px "Liberation Serif", serif;
  fill: #777;
  stroke: none;
}
.taskbar {
  background-color: #77776a;
}
```
